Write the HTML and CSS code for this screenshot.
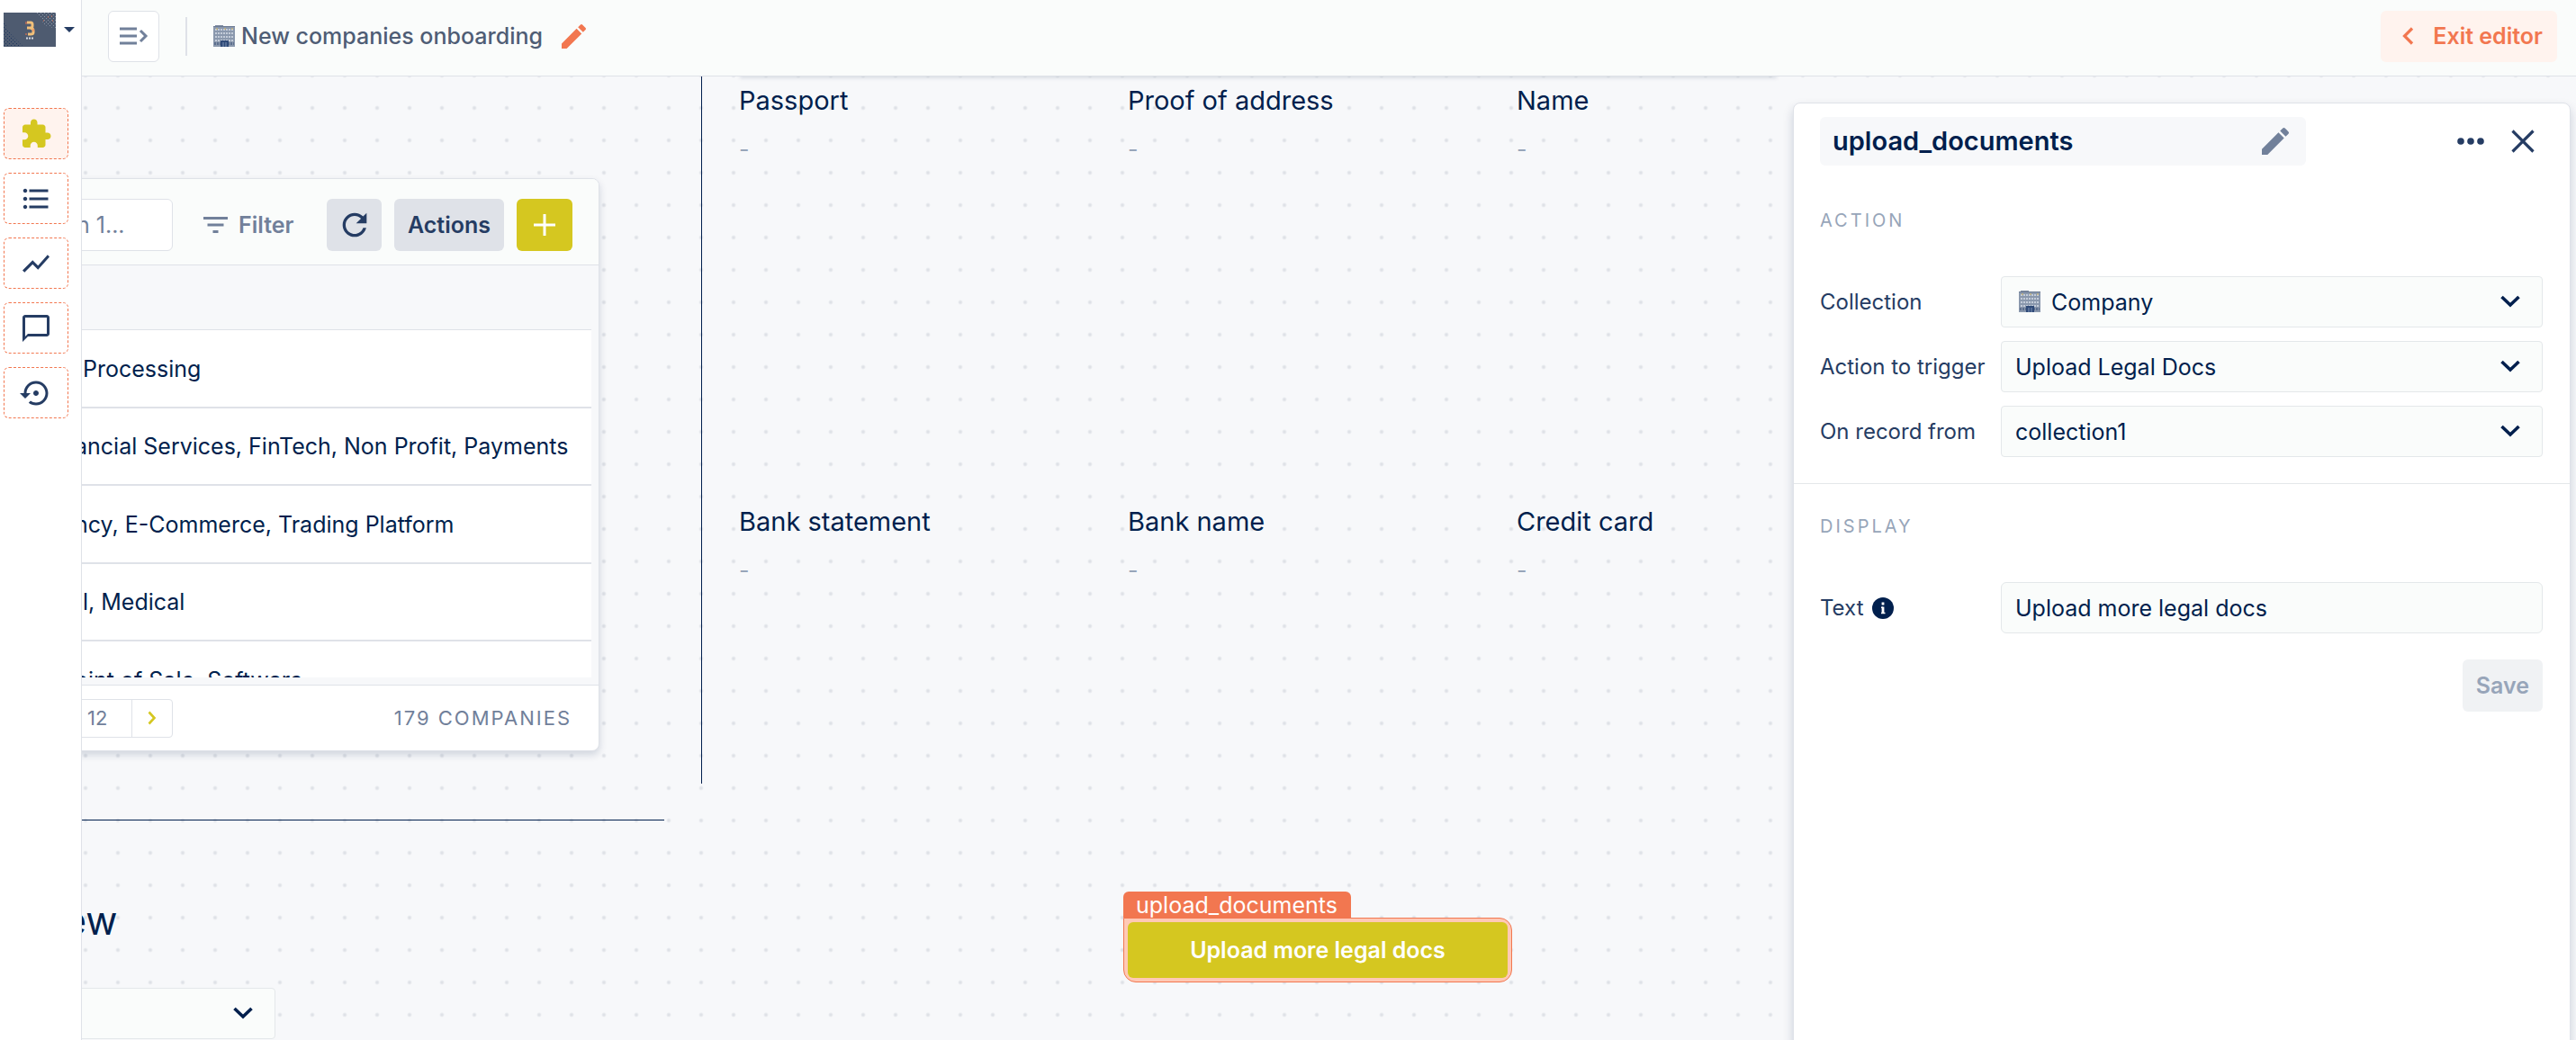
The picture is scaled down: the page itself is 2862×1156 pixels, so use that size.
FILE: index.html
```
<!DOCTYPE html>
<html lang="en">
<head>
<meta charset="utf-8">
<title>New companies onboarding</title>
<link rel="stylesheet" href="styles.css">
</head>
<body>
<svg class="defs" width="0" height="0" aria-hidden="true">
  <symbol id="chevron-down" viewBox="0 0 24 14"><path d="M2.500 2 L12 11 L21.500 2" fill="none" stroke="currentColor" stroke-width="3.600"/></symbol>
  <symbol id="pencil" viewBox="3 3 18 18"><path fill="currentColor" d="M3 17.250V21h3.750L17.810 9.940l-3.750-3.750L3 17.250zM20.710 7.040c.39-.39.39-1.020 0-1.410l-2.340-2.340c-.39-.39-1.020-.39-1.410 0l-1.830 1.830 3.750 3.750 1.830-1.830z"/></symbol>
  <symbol id="building" viewBox="0 0 24 24">
    <rect x="2" y="0" width="9" height="3" fill="#7d8ba0"/>
    <rect x="0" y="1" width="24" height="23" fill="#8a98ad"/>
    <path d="M2 5H22M2 9H22M2 13H22M2 17H22" stroke="#c4ccd9" stroke-width="2" stroke-dasharray="2 1"/>
    <path d="M0 1.500H24" stroke="#6c7b93" stroke-width="1"/>
    <path d="M3 4h2M12 4h2M20 4h2" stroke="#d9b95c" stroke-width="1"/>
    <path d="M1 20.500H23" stroke="#5d6f8e" stroke-width="3" stroke-dasharray="2 1"/>
    <rect x="8" y="17" width="9" height="7" fill="#2f4a78"/>
    <path d="M11 19v5M14 19v5" stroke="#7f93b5" stroke-width="1"/>
  </symbol>
</svg>

<div class="app">
  <aside class="sidebar">
    <button class="project" type="button" aria-label="Switch project">
      <svg width="58" height="38" viewBox="0 0 58 38">
        <defs><pattern id="noise" width="4" height="4" patternUnits="userSpaceOnUse"><rect x="0" y="0" width="1" height="1" fill="#1f3760"/><rect x="2" y="2" width="1" height="1" fill="#1f3760"/></pattern>
        <pattern id="noise2" width="4" height="4" patternUnits="userSpaceOnUse"><rect x="1" y="0" width="1" height="1" fill="#8d98a8"/><rect x="3" y="2" width="1" height="1" fill="#8d98a8"/></pattern></defs>
        <rect width="58" height="38" fill="#4e5b70"/>
        <path d="M0 10L8 24L22 38H0z" fill="url(#noise)"/>
        <path d="M36 0H58V18L46 14z" fill="url(#noise2)"/>
        <path d="M44 9h1M49 5h1M53 4h1M54 9h1" stroke="#f27750"/>
        <path d="M26 11H30Q32 11 32 13V15Q32 17 29 17H26M29 17Q33 17 33 20V22Q33 24 30 24H27" fill="none" stroke="#f0c07a" stroke-width="3"/>
        <path d="M25 10v3M25 23v2M33 18v3" stroke="#f27750"/>
        <path d="M25 28.500h9" stroke="#d5dae2" stroke-width="2" stroke-dasharray="2 1"/>
      </svg>
      <svg width="12" height="6" viewBox="0 0 12 6"><path d="M0 0H12L6 6z" fill="#253c63"/></svg>
    </button>
    <nav class="nav">
      <a class="nav-item active" href="#workspace" aria-label="Workspaces"><svg viewBox="0 0 24 24"><path d="M20.500 11H19V7c0-1.100-.9-2-2-2h-4V3.500C13 2.120 11.880 1 10.500 1S8 2.120 8 3.500V5H4c-1.100 0-1.990.9-1.990 2v3.800H3.500c1.490 0 2.700 1.210 2.700 2.700s-1.210 2.700-2.700 2.700H2V20c0 1.100.9 2 2 2h3.800v-1.500c0-1.490 1.210-2.700 2.700-2.700s2.700 1.210 2.700 2.700V22H17c1.100 0 2-.9 2-2v-4h1.500c1.380 0 2.500-1.120 2.500-2.500S21.880 11 20.500 11z"/></svg></a>
      <a class="nav-item" href="#data" aria-label="Data"><svg viewBox="0 0 24 24"><path d="M4 10.500c-.83 0-1.500.67-1.500 1.500s.67 1.500 1.500 1.500 1.500-.67 1.500-1.500-.67-1.500-1.500-1.500zm0-6c-.83 0-1.500.67-1.500 1.500S3.170 7.500 4 7.500 5.500 6.830 5.500 6 4.830 4.500 4 4.500zm0 12c-.83 0-1.500.68-1.500 1.500s.68 1.500 1.500 1.500 1.500-.68 1.500-1.500-.67-1.500-1.500-1.500zM7 19h14v-2H7v2zm0-6h14v-2H7v2zm0-8v2h14V5H7z"/></svg></a>
      <a class="nav-item" href="#charts" aria-label="Dashboards"><svg viewBox="0 0 24 24"><path d="M3.500 18.490l6-6.010 4 4L22 6.920l-1.410-1.410-7.090 7.970-4-4L2 16.990z"/></svg></a>
      <a class="nav-item" href="#notes" aria-label="Collaboration"><svg viewBox="0 0 24 24"><path d="M20 2H4c-1.100 0-2 .9-2 2v18l4-4h14c1.100 0 2-.9 2-2V4c0-1.100-.9-2-2-2zm0 14H6l-2 2V4h16v12z"/></svg></a>
      <a class="nav-item" href="#activity" aria-label="Activity"><svg viewBox="0 0 24 24"><path d="M14 12c0-1.100-.9-2-2-2s-2 .9-2 2 .9 2 2 2 2-.9 2-2zm-2-9c-4.970 0-9 4.030-9 9H0l4 4 4-4H5c0-3.870 3.130-7 7-7s7 3.130 7 7-3.130 7-7 7c-1.510 0-2.910-.49-4.060-1.300l-1.420 1.440C8.040 20.300 9.940 21 12 21c4.970 0 9-4.030 9-9s-4.030-9-9-9z"/></svg></a>
    </nav>
  </aside>

  <div class="main">
    <header class="topbar">
      <button class="menu-toggle" type="button" aria-label="Expand menu"><svg width="32" height="20" viewBox="0 0 32 20"><path d="M0 2H19M0 10H19M0 18H19" stroke="currentColor" stroke-width="3"/><path d="M23 4L29 10L23 16" fill="none" stroke="currentColor" stroke-width="3"/></svg></button>
      <span class="topbar-divider"></span>
      <svg class="building" width="24" height="24"><use href="#building"/></svg>
      <h1 class="page-title">New companies onboarding</h1>
      <button class="edit-title" type="button" aria-label="Rename workspace"><svg width="27" height="27"><use href="#pencil"/></svg></button>
      <button class="exit" type="button"><svg width="13" height="20" viewBox="0 0 13 20"><path d="M11 1.500L2.500 10L11 18.500" fill="none" stroke="currentColor" stroke-width="3.200"/></svg>Exit editor</button>
    </header>

    <main class="canvas">
      <section class="collection">
        <div class="toolbar">
          <input class="search" type="text" placeholder="n 1..." aria-label="Search">
          <button class="filter" type="button"><svg width="27" height="18" viewBox="0 0 27 18"><path d="M0 1.500H27M4.500 9H22.500M10.500 16.500H16.500" stroke="currentColor" stroke-width="3"/></svg>Filter</button>
          <button class="tool refresh" type="button" aria-label="Refresh"><svg width="40" height="40" viewBox="0 0 24 24"><path fill="currentColor" d="M17.650 6.350C16.200 4.900 14.210 4 12 4c-4.420 0-7.990 3.580-7.990 8s3.570 8 7.990 8c3.730 0 6.840-2.550 7.730-6h-2.080c-.82 2.330-3.040 4-5.650 4-3.310 0-6-2.690-6-6s2.690-6 6-6c1.660 0 3.140.69 4.220 1.780L13 11h7V4l-2.350 2.350z"/></svg></button>
          <button class="tool" type="button">Actions</button>
          <button class="tool add" type="button" aria-label="Add"><svg width="24" height="24" viewBox="0 0 24 24"><path d="M12 0V24M0 12H24" stroke="currentColor" stroke-width="3"/></svg></button>
        </div>
        <div class="rows">
          <table>
            <thead><tr><th aria-label="Tags"></th></tr></thead>
            <tbody>
              <tr><td class="short">Processing</td></tr>
              <tr><td>ancial Services, FinTech, Non Profit, Payments</td></tr>
              <tr><td>ncy, E-Commerce, Trading Platform</td></tr>
              <tr><td class="short">l, Medical</td></tr>
              <tr><td>oint of Sale, Software</td></tr>
            </tbody>
          </table>
        </div>
        <footer class="pager">
          <span class="page-count">12</span>
          <button class="page-next" type="button" aria-label="Next page"><svg width="10" height="16" viewBox="0 0 10 16"><path d="M1.500 1.500L7.500 8L1.500 14.500" fill="none" stroke="currentColor" stroke-width="2.600"/></svg></button>
          <span class="total">179 COMPANIES</span>
        </footer>
      </section>

      <hr class="rule rule-x">
      <hr class="rule rule-y">

      <h2 class="heading">ew</h2>
      <div class="select picker"><select aria-label="Record"><option></option></select><svg class="chevron" width="24" height="14"><use href="#chevron-down"/></svg></div>

      <div class="scrolled-card"></div>
      <dl class="fields">
        <div class="field"><dt>Passport</dt><dd>-</dd></div>
        <div class="field"><dt>Proof of address</dt><dd>-</dd></div>
        <div class="field"><dt>Name</dt><dd>-</dd></div>
        <div class="field"><dt>Bank statement</dt><dd>-</dd></div>
        <div class="field"><dt>Bank name</dt><dd>-</dd></div>
        <div class="field"><dt>Credit card</dt><dd>-</dd></div>
      </dl>

      <div class="selected">
        <span class="selected-name">upload_documents</span>
        <div class="selected-frame"><button class="cta" type="button">Upload more legal docs</button></div>
      </div>

      <aside class="panel">
        <header class="panel-head">
          <div class="panel-name"><h2>upload_documents</h2><button type="button" aria-label="Rename component"><svg width="30" height="30"><use href="#pencil"/></svg></button></div>
          <button class="more" type="button" aria-label="More options"><svg width="30" height="8" viewBox="0 0 30 8"><circle cx="4" cy="4" r="3.800"/><circle cx="15" cy="4" r="3.800"/><circle cx="26" cy="4" r="3.800"/></svg></button>
          <button class="close" type="button" aria-label="Close"><svg width="26" height="26" viewBox="0 0 26 26"><path d="M1.500 1.500L24.500 24.500M24.500 1.500L1.500 24.500" stroke="currentColor" stroke-width="3.200"/></svg></button>
        </header>
        <section class="group group-action">
          <h3>ACTION</h3>
          <div class="row"><label for="collection">Collection</label><div class="select with-icon"><svg class="lead" width="24" height="24"><use href="#building"/></svg><select id="collection"><option>Company</option></select><svg class="chevron" width="24" height="14"><use href="#chevron-down"/></svg></div></div>
          <div class="row"><label for="action">Action to trigger</label><div class="select"><select id="action"><option>Upload Legal Docs</option></select><svg class="chevron" width="24" height="14"><use href="#chevron-down"/></svg></div></div>
          <div class="row"><label for="record">On record from</label><div class="select"><select id="record"><option>collection1</option></select><svg class="chevron" width="24" height="14"><use href="#chevron-down"/></svg></div></div>
        </section>
        <section class="group">
          <h3>DISPLAY</h3>
          <div class="row"><label for="text">Text <svg width="24" height="24" viewBox="0 0 24 24"><circle cx="12" cy="12" r="12" fill="#001f4d"/><path d="M12 5.500v3M12 10.500V18" fill="none" stroke="#fff" stroke-width="2.800"/><path d="M10 11.200H12M10 17.500H14.500" stroke="#fff" stroke-width="1.400"/></svg></label><input id="text" type="text" value="Upload more legal docs"></div>
          <button class="save" type="button" disabled>Save</button>
        </section>
      </aside>
    </main>
  </div>
</div>
</body>
</html>
```
FILE: styles.css
```
:root {
  --navy: #001f4d;
  --ink: #253c63;
  --slate: #71809a;
  --line: #dfe2e8;
  --soft: #fafcfb;
  --canvas: #f7f8fa;
  --coral: #f27750;
  --lime: #d5c720;
}

* { box-sizing: border-box; }

body {
  margin: 0;
  font: 400 25px/32px Inter, "Liberation Sans", sans-serif;
  color: var(--navy);
  background: #fff;
}

button, input, select { font: inherit; color: inherit; margin: 0; }

button {
  display: flex;
  align-items: center;
  justify-content: center;
  padding: 0;
  border: 0;
  border-radius: 6px;
  background: none;
  cursor: pointer;
}

h1, h2, h3, dl, dd { margin: 0; font-weight: inherit; }
svg { display: block; flex: none; }
.defs { position: absolute; }

.app { display: flex; height: 100vh; overflow: hidden; }

/* Sidebar */
.sidebar {
  flex: none;
  width: 91px;
  padding: 14px 0 0 4px;
  border-right: 1px solid var(--line);
  background: #fff;
}
.project { gap: 9px; height: 38px; border-radius: 0; }
.nav { display: flex; flex-direction: column; gap: 15px; margin-top: 68px; }
.nav-item {
  display: flex;
  align-items: center;
  justify-content: center;
  width: 72px;
  height: 57px;
  border: 1px dashed var(--coral);
  border-radius: 6px;
  color: var(--ink);
}
.nav-item svg { width: 36px; height: 36px; fill: currentColor; }
.nav-item.active { background: #fff3ee; color: var(--lime); }

/* Top bar */
.main { flex: 1; min-width: 0; display: flex; flex-direction: column; }
.topbar {
  display: flex;
  align-items: center;
  height: 85px;
  padding: 0 21px 4px 29px;
  border-bottom: 1px solid var(--line);
  background: var(--soft);
}
.menu-toggle {
  width: 57px;
  height: 57px;
  border: 1px solid var(--line);
  background: #fff;
  color: var(--slate);
}
.topbar-divider { width: 2px; height: 43px; margin: 0 29px; background: var(--line); }
.page-title { margin-left: 7px; font-size: 25px; font-weight: 500; color: #4f5d75; }
.edit-title { margin-left: 21px; color: var(--coral); }
.exit {
  gap: 21px;
  height: 57px;
  margin-left: auto;
  padding: 0 16px 0 24px;
  background: #fff3ee;
  color: var(--coral);
  font-weight: 600;
}

/* Canvas: widgets are placed freely on a dotted grid */
.canvas {
  position: relative;
  flex: 1;
  overflow: hidden;
  background: var(--canvas) radial-gradient(circle, #dfe2e7 0, #dfe2e7 1px, transparent 3px) -14px 17px / 36px 36px;
}

.collection {
  position: absolute;
  left: -24px;
  top: 113px;
  width: 599px;
  border: 1px solid var(--line);
  border-radius: 8px;
  background: #fff;
  box-shadow: 0 4px 8px rgba(0, 31, 77, .16);
  overflow: hidden;
}
.toolbar {
  display: flex;
  align-items: center;
  height: 96px;
  padding: 6px 29px 0 0;
  border-bottom: 1px solid var(--line);
  background: var(--soft);
}
.search {
  width: 124px;
  height: 58px;
  padding: 0 0 0 16px;
  border: 1px solid var(--line);
  border-radius: 6px;
  background: #fff;
}
.search::placeholder { color: var(--slate); opacity: 1; }
.filter { gap: 12px; margin: 0 auto 0 34px; color: var(--slate); font-weight: 600; }
.tool {
  height: 58px;
  margin-left: 14px;
  padding: 0 15px;
  background: var(--line);
  color: var(--ink);
  font-weight: 600;
}
.tool.refresh { width: 61px; padding: 0; }
.tool.add { width: 62px; background: var(--lime); color: #fff; }

.rows { height: 466px; padding-right: 8px; overflow: hidden; background: var(--canvas); border-bottom: 8px solid var(--canvas); }
.rows table { width: 100%; border-collapse: separate; border-spacing: 0; }
.rows th { height: 72px; padding: 0; border-bottom: 1px solid var(--line); }
.rows td {
  height: 87px;
  padding: 0 0 0 15px;
  border-bottom: 2px solid var(--line);
  background: #fff;
  white-space: nowrap;
}
.rows tr:nth-child(even) td { height: 86px; }
.rows td.short { padding-left: 24px; }

.pager { display: flex; align-items: center; height: 73px; padding-right: 30px; border-top: 1px solid var(--line); font-size: 22px; color: var(--slate); }
.page-count, .page-next { height: 43px; border: 1px solid var(--line); line-height: 41px; }
.page-count { width: 79px; padding-left: 28px; }
.page-next { width: 46px; margin-left: -1px; border-radius: 0 4px 4px 0; color: var(--lime); }
.total { margin-left: auto; letter-spacing: 2px; }

.rule { position: absolute; margin: 0; border: 0; background: var(--navy); }
.rule-x { left: 0; top: 826px; width: 647px; height: 1px; }
.rule-y { left: 688px; top: 0; width: 1px; height: 786px; }

.heading { position: absolute; left: -20px; top: 911px; font-size: 43px; line-height: 54px; }
.picker { position: absolute; left: -30px; top: 1013px; width: 245px; }

.scrolled-card { position: absolute; left: 731px; top: -8px; width: 1152px; height: 8px; box-shadow: 0 2px 4px rgba(0, 31, 77, .12); }
.fields {
  position: absolute;
  left: 730px;
  top: 9px;
  display: grid;
  grid-template-columns: repeat(3, 432px);
  grid-auto-rows: 468px;
}
.field dt { font-size: 29px; line-height: 36px; }
.field dd { margin-top: 20px; color: #97a5b9; }

.selected { position: absolute; left: 1157px; top: 906px; width: 432px; }
.selected-name {
  display: block;
  width: max-content;
  padding: 2px 15px 0 14px;
  border-radius: 6px 6px 0 0;
  background: var(--coral);
  color: #fff;
  line-height: 27px;
}
.selected-frame { padding: 4px; border: 1px solid var(--coral); border-radius: 0 14px 14px 14px; background: #ffc9b5; }
.cta { width: 100%; height: 62px; background: var(--lime); color: #fff; font-weight: 600; }

/* Form controls */
.select { position: relative; }
.select select, .row input {
  display: block;
  width: 100%;
  height: 57px;
  padding: 0 15px;
  border: 1px solid #e4e8ea;
  border-radius: 4px;
  background: var(--soft);
  appearance: none;
}
.select .chevron { position: absolute; right: 24px; top: 21px; pointer-events: none; }
.select .lead { position: absolute; left: 20px; top: 16px; pointer-events: none; }
.select.with-icon select { padding-left: 55px; }

/* Settings panel */
.panel {
  position: absolute;
  right: 6px;
  top: 29px;
  bottom: -8px;
  width: 864px;
  border: 1px solid var(--line);
  border-radius: 8px;
  background: #fff;
  box-shadow: 0 6px 12px rgba(0, 31, 77, .18);
}
.panel-head { display: flex; align-items: center; padding: 15px 39px 0 29px; color: var(--ink); }
.panel-name {
  display: flex;
  align-items: center;
  justify-content: space-between;
  width: 540px;
  height: 54px;
  padding: 0 19px 0 14px;
  border-radius: 6px;
  background: var(--canvas);
}
.panel-name h2 { font-size: 29px; font-weight: 600; color: var(--navy); }
.panel-name button { color: var(--slate); }
.more { margin-left: auto; fill: currentColor; }
.close { margin-left: 30px; }

.group { padding: 32px 30px 0 29px; }
.group h3 { margin-bottom: 47px; font-size: 20px; line-height: 30px; letter-spacing: 3px; color: #97a5b9; }
.group-action { padding: 46px 30px 14px 29px; border-bottom: 1px solid #e4e8ea; }
.row { display: grid; grid-template-columns: 201px 1fr; align-items: center; margin-bottom: 15px; }
.row label { display: flex; align-items: center; gap: 9px; font-size: 24px; color: var(--ink); white-space: nowrap; }
.row input { border-radius: 6px; }
.save { height: 58px; margin: 29px 0 0 auto; padding: 0 15px; background: #f0f2f4; color: #97a5b9; font-weight: 600; }
```
